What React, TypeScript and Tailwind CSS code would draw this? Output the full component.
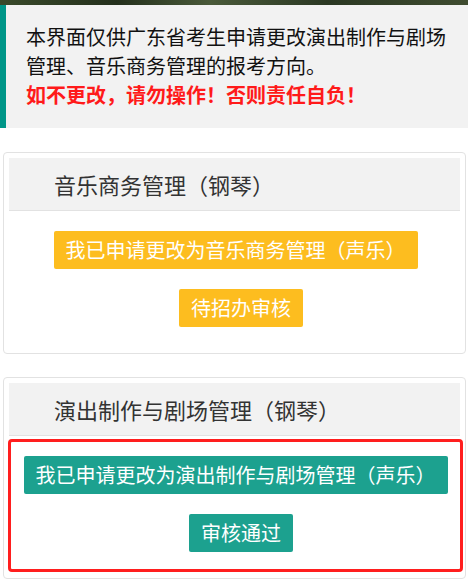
const font = { fontFamily: '"Noto Sans CJK SC", "Noto Sans", sans-serif' };

type Card = {
  title: string;
  request: string;
  status: string;
  tone: "warm" | "ok";
  marked?: boolean;
};

const cards: Card[] = [
  {
    title: "音乐商务管理（钢琴）",
    request: "我已申请更改为音乐商务管理（声乐）",
    status: "待招办审核",
    tone: "warm",
  },
  {
    title: "演出制作与剧场管理（钢琴）",
    request: "我已申请更改为演出制作与剧场管理（声乐）",
    status: "审核通过",
    tone: "ok",
    marked: true,
  },
];

function Btn({ label, tone, extra }: { label: string; tone: Card["tone"]; extra?: string }) {
  return (
    <button
      className={`h-[38px] px-[12px] rounded-[2px] text-white text-[20px] leading-[38px] whitespace-nowrap ${
        tone === "warm" ? "bg-[#fdbd1f]" : "bg-[#1ca18f]"
      } ${extra ?? ""}`}
    >
      {label}
    </button>
  );
}

export default function App() {
  return (
    <div className="w-[468px] min-h-[581px] bg-white" style={font}>
      {/* photo strip at top */}
      <div className="h-[5px] bg-[linear-gradient(90deg,#3a4a2b,#24301c_25%,#4a5a3a_45%,#2b3823_70%,#3f4c30)]" />

      {/* notice */}
      <div className="bg-[#f2f2f2] border-l-[6px] border-[#009688] pl-[20px] pr-[14px] pt-[17px] pb-[19px] text-[20px] leading-[29px] text-[#111]">
        <p>本界面仅供广东省考生申请更改演出制作与剧场管理、音乐商务管理的报考方向。</p>
        <p className="text-[#ff1a1a] font-bold">如不更改，请勿操作！否则责任自负！</p>
      </div>

      <div className="flex flex-col gap-[23px] pt-[24px] pl-[3px] pr-[2px]">
        {cards.map((c) => (
          <div key={c.title} className="border border-[#e2e2e2] rounded-[4px] p-[5px] pb-[6px]">
            <div className="h-[53px] bg-[#f2f2f2] border-b border-[#e2e2e2] pl-[45px] flex items-center text-[22px] text-[#333]">
              {c.title}
            </div>
            <div
              className={`mt-[3px] -ml-[1px] -mr-[3px] border-[3px] rounded-[4px] pt-[14px] pb-[17px] flex flex-col items-center gap-[20px] ${
                c.marked ? "border-[#ff1e1e]" : "border-transparent"
              }`}
            >
              <Btn label={c.request} tone={c.tone} />
              <Btn label={c.status} tone={c.tone} extra="ml-[11px]" />
            </div>
          </div>
        ))}
      </div>
    </div>
  );
}
